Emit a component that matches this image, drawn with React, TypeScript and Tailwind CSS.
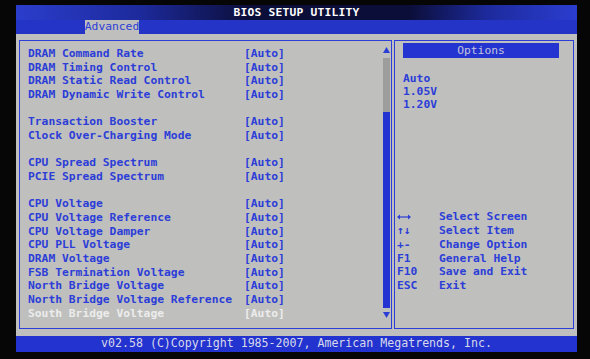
import React from 'react';

const rows: (string | null)[] = [
  'DRAM Command Rate',
  'DRAM Timing Control',
  'DRAM Static Read Control',
  'DRAM Dynamic Write Control',
  null,
  'Transaction Booster',
  'Clock Over-Charging Mode',
  null,
  'CPU Spread Spectrum',
  'PCIE Spread Spectrum',
  null,
  'CPU Voltage',
  'CPU Voltage Reference',
  'CPU Voltage Damper',
  'CPU PLL Voltage',
  'DRAM Voltage',
  'FSB Termination Voltage',
  'North Bridge Voltage',
  'North Bridge Voltage Reference',
  'South Bridge Voltage',
];

const help: { k: React.ReactNode; d: string }[] = [
  {
    k: (
      <svg width="14" height="6" viewBox="0 0 14 6" className="mt-[4px]">
        <path d="M1 3H13" stroke="#2c3dd8" strokeWidth="1.2" />
        <path d="M0 3L3 0.5V5.5Z M14 3L11 0.5V5.5Z" fill="#2c3dd8" />
      </svg>
    ),
    d: 'Select Screen',
  },
  { k: '↑↓', d: 'Select Item' },
  { k: '+-', d: 'Change Option' },
  { k: 'F1', d: 'General Help' },
  { k: 'F10', d: 'Save and Exit' },
  { k: 'ESC', d: 'Exit' },
];

export default function App() {
  return (
    <div className="w-[590px] h-[359px] bg-[#060606] pl-[16px] pr-[13px] pt-[5px] pb-[7px] flex flex-col font-['DejaVu_Sans_Mono',monospace] font-bold text-[11.3px] text-[#2c3dd8] overflow-hidden">
      {/* title */}
      <div className="h-[15px] bg-[linear-gradient(90deg,#2b3dcc_0%,#1d2a9c_22%,#0b0e38_42%,#0b0e38_70%,#1d2a9c_84%,#2b3dd0_100%)] flex items-center justify-center text-white leading-none tracking-[0.2px]">
        BIOS SETUP UTILITY
      </div>
      {/* tabs */}
      <div className="h-[14px] bg-[#2434c6] flex pl-[69px]">
        <div className="w-[54px] bg-[#bfc0be] flex items-center justify-center leading-none text-[#2c3dd8] font-normal">
          Advanced
        </div>
      </div>
      {/* main */}
      <div className="flex-1 bg-[#bfc0bd] pt-[6px] pl-[3px] pr-[3px] pb-[7px] flex gap-[2px]">
        {/* left panel */}
        <div className="w-[373px] border border-[#2c3dd8] flex">
          <div className="flex-1 pl-[8px] pt-[6px] flex flex-col">
            {rows.map((r, i) =>
              r === null ? (
                <div key={i} className="h-[13.68px]" />
              ) : (
                <div
                  key={i}
                  className={
                    'h-[13.68px] leading-[13.68px] grid grid-cols-[216px_1fr] whitespace-pre ' +
                    (r === 'South Bridge Voltage' ? 'text-[#ececec]' : '')
                  }
                >
                  <span>{r}</span>
                  <span>[Auto]</span>
                </div>
              )
            )}
          </div>
          <div className="w-[8px] mr-[1px] pt-[6px] pb-[10px] flex flex-col items-center">
            <svg width="7" height="6" viewBox="0 0 7 6">
              <path d="M3.5 0L7 6H0Z" fill="#2c3dd8" />
            </svg>
            <div className="mt-[5px] flex-1 w-[7px] flex flex-col">
              <div className="h-[54px] bg-[#9d9e9c]" />
              <div className="flex-1 bg-[#2434d0]" />
            </div>
            <svg width="7" height="6" viewBox="0 0 7 6" className="mt-[4px]">
              <path d="M0 0H7L3.5 6Z" fill="#2c3dd8" />
            </svg>
          </div>
        </div>
        {/* right panel */}
        <div className="flex-1 border border-[#2c3dd8] flex flex-col">
          <div className="mt-[2px] ml-[8px] mr-[14px] h-[15px] bg-[#2434d0] flex items-center justify-center text-[#c4c6dc] font-normal leading-none">
            Options
          </div>
          <div className="mt-[14px] ml-[8px] flex flex-col">
            <div className="h-[13.2px] leading-[13.2px]">Auto</div>
            <div className="h-[13.2px] leading-[13.2px]">1.05V</div>
            <div className="h-[13.2px] leading-[13.2px]">1.20V</div>
          </div>
          <div className="mt-auto mb-[35px] ml-[2px] flex flex-col">
            {help.map((h, i) => (
              <div key={i} className="h-[13.8px] leading-[13.8px] grid grid-cols-[42px_1fr] whitespace-pre">
                <span className="flex items-start">{h.k}</span>
                <span>{h.d}</span>
              </div>
            ))}
          </div>
        </div>
      </div>
      {/* footer */}
      <div className="h-[16px] bg-[#2233d0] flex items-center justify-center text-[#d8d9ea] font-normal text-[11.6px] leading-none whitespace-pre">
        v02.58 (C)Copyright 1985-2007, American Megatrends, Inc.
      </div>
    </div>
  );
}
